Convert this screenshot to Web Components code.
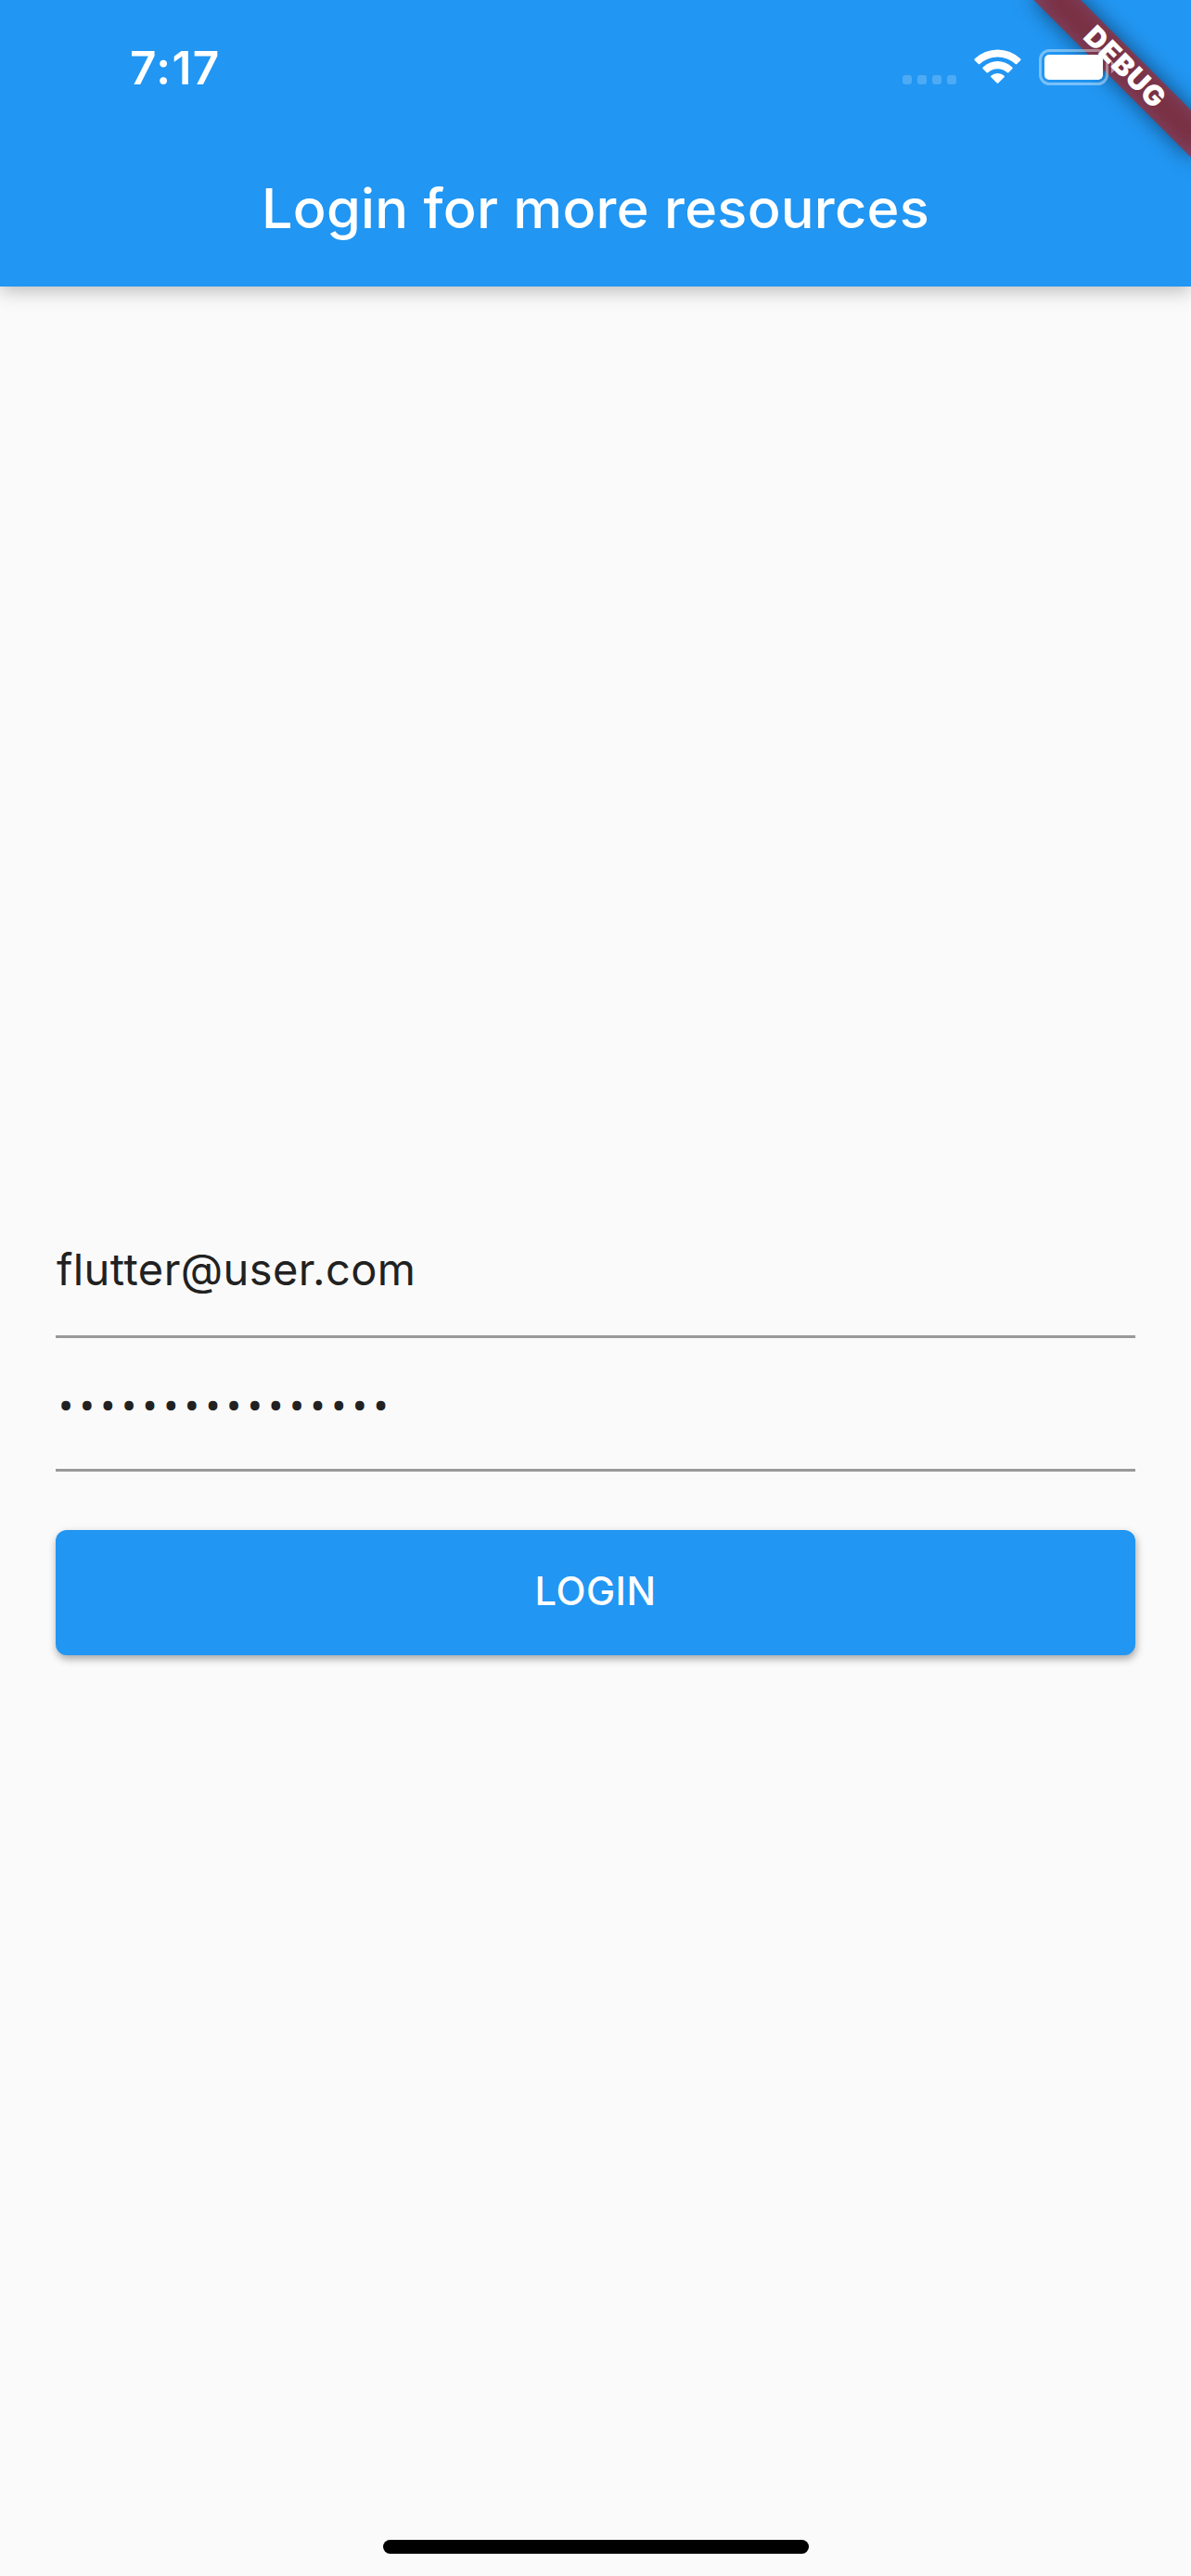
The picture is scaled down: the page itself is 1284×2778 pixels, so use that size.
<!DOCTYPE html>
<html lang="en">
<head>
<meta charset="utf-8">
<title>Login</title>
<style>
  html, body { margin: 0; height: 100%; }
  body { font-family: Inter, "Liberation Sans", sans-serif; background: #fafafa; color: #212121; overflow: hidden; }
</style>
</head>
<body>
<login-screen></login-screen>
<script>
function define(name, html) {
  const template = document.createElement('template');
  template.innerHTML = html;
  customElements.define(name, class extends HTMLElement {
    constructor() {
      super();
      this.attachShadow({ mode: 'open' }).append(template.content.cloneNode(true));
    }
  });
}

define('signal-dots', `
  <style>
    :host { display: flex; gap: 6px; }
    i { width: 10px; height: 10px; border-radius: 3px; background: rgba(255,255,255,.2); }
  </style>
  <i></i><i></i><i></i><i></i>`);

define('wifi-icon', `
  <style>:host { display: block; } svg { display: block; }</style>
  <svg width="51" height="38" viewBox="0 0 51 38" fill="#fff">
    <path d="M0.9 12.2Q-.1 11.2 .9 10.3A35.5 35.5 0 0 1 50.1 10.3Q51.1 11.2 50.1 12.2L46.2 16.1Q45.5 16.8 44.7 16A28.5 28.5 0 0 0 6.3 16Q5.5 16.8 4.8 16.1Z"/>
    <path d="M9.7 21.2Q8.7 20.3 9.7 19.4A23 23 0 0 1 41.3 19.4Q42.3 20.3 41.3 21.2L37.4 25.2Q36.6 25.9 35.8 25.2A15.5 15.5 0 0 0 15.2 25.2Q14.4 25.9 13.6 25.2Z"/>
    <path d="M18.4 30.2Q17.6 29.3 18.5 28.6A10.9 10.9 0 0 1 32.5 28.6Q33.4 29.3 32.6 30.2L26.3 36.6Q25.5 37.4 24.7 36.6Z"/>
  </svg>`);

define('battery-icon', `
  <style>:host { display: block; } svg { display: block; }</style>
  <svg width="82" height="39" viewBox="0 0 82 39" fill="none">
    <rect x="1.5" y="1.5" width="72" height="36" rx="10" stroke="#fff" stroke-opacity=".4" stroke-width="3"/>
    <rect x="6" y="6" width="63" height="27" rx="5" fill="#fff"/>
    <path d="M78 13Q82 15 82 19.5Q82 24 78 26Z" fill="#fff" fill-opacity=".45"/>
  </svg>`);

define('status-bar', `
  <style>
    :host { display: flex; justify-content: space-between; height: 141px; box-sizing: border-box;
            position: relative; z-index: 1; padding: 0 82px 0 140px; color: #fff; }
    time { font-size: 49.5px; font-weight: 600; line-height: 60px; letter-spacing: 1.4px; padding-top: 43px; }
    div { display: flex; align-items: flex-start; padding-top: 53px; }
    signal-dots { margin: 28px 19px 0 0; }
    battery-icon { margin-left: 19px; }
  </style>
  <time>7:17</time>
  <div><signal-dots></signal-dots><wifi-icon></wifi-icon><battery-icon></battery-icon></div>`);

/* Corner ribbon: a strip rotated about the top right corner of the screen. */
define('debug-banner', `
  <style>
    :host { position: absolute; top: 0; right: 0; width: 240px; height: 240px; overflow: hidden; color: #fff; }
    div { position: absolute; left: 240px; top: 0; width: 0; height: 0; transform: rotate(45deg); }
    i, span { position: absolute; left: -120px; top: 84px; width: 240px; height: 36px; }
    i { background: rgba(0,0,0,.5); filter: blur(11.9px); }
    span { background: rgba(183,28,28,.627); text-align: center; font-size: 30.5px; font-weight: 900;
           line-height: 33px; letter-spacing: .8px; text-indent: 2px; }
  </style>
  <div><i></i><span><slot></slot></span></div>`);

define('app-bar', `
  <style>
    :host { display: block; position: relative; height: 309px; background: #2196f3; color: #fff;
            box-shadow: 0 4px 20px rgba(0,0,0,.27); }
    h1 { margin: 0; height: 168px; line-height: 166px; text-align: center; font-size: 59.5px;
         font-weight: 500; letter-spacing: .25px; white-space: nowrap; }
  </style>
  <debug-banner>DEBUG</debug-banner>
  <status-bar></status-bar>
  <h1><slot></slot></h1>`);

define('text-field', `
  <style>
    :host { display: block; box-sizing: border-box; height: 144px; border-bottom: 3px solid #999;
            padding-left: 1px; font-size: 47px; line-height: 140px; letter-spacing: .42px; white-space: nowrap; }
    :host([obscured]) { font-family: Roboto, sans-serif; font-size: 48px; letter-spacing: 6.43px;
            padding: 5px 0 0 3px; }
  </style>
  <slot></slot>`);

define('raised-button', `
  <style>
    :host { display: block; }
    button { display: block; width: 100%; height: 135px; border: 0; border-radius: 12px; padding: 0 0 3px;
             background: #2196f3; color: #fff; font: 500 41.7px/132px Inter, sans-serif; letter-spacing: .5px;
             box-shadow: 1px 4px 9px rgba(0,0,0,.34); }
  </style>
  <button type="button"><slot></slot></button>`);

define('home-indicator', `
  <style>:host { display: block; width: 459px; height: 15px; border-radius: 8px; background: #000; }</style>`);

define('login-screen', `
  <style>
    :host { display: flex; flex-direction: column; position: relative; height: 2778px; width: 1284px;
            overflow: hidden; background: #fafafa; }
    main { flex: 1; display: grid; }
    form { grid-area: 1 / 1; align-self: center; padding: 0 60px 3px; }
    raised-button { margin-top: 63px; }
    home-indicator { grid-area: 1 / 1; align-self: end; justify-self: center; margin: 0 0 24px 1px; }
  </style>
  <app-bar>Login for more resources</app-bar>
  <main>
    <form>
      <text-field>flutter@user.com</text-field>
      <text-field obscured>••••••••••••••••</text-field>
      <raised-button>LOGIN</raised-button>
    </form>
    <home-indicator></home-indicator>
  </main>`);
</script>
</body>
</html>
